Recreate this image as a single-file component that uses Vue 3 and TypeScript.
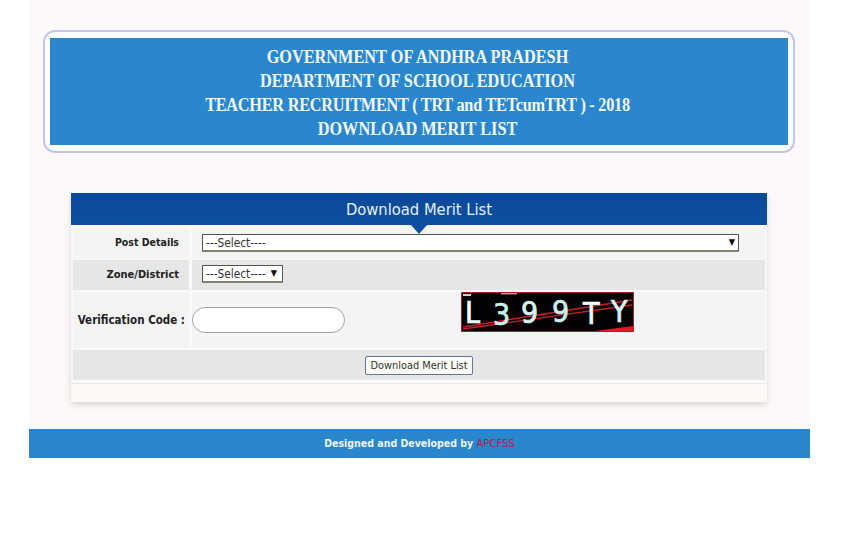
<script setup lang="ts">
const headerLines: string[] = [
  'GOVERNMENT OF ANDHRA PRADESH',
  'DEPARTMENT OF SCHOOL EDUCATION',
  'TEACHER RECRUITMENT ( TRT and TETcumTRT ) - 2018',
  'DOWNLOAD MERIT LIST',
]
</script>

<template>
  <div class="page">
    <main class="sheet">
      <header class="banner-frame">
        <div class="banner">
          <div class="banner-text">
            <div v-for="line in headerLines" :key="line" class="banner-line">{{ line }}</div>
          </div>
        </div>
      </header>

      <section class="panel">
        <h1 class="panel-title">Download Merit List</h1>
        <div class="form">
          <div class="label row-a row-post">Post Details</div>
          <div class="value row-a row-post">
            <div class="select-wrap wide">
              <select class="select"><option>---Select----</option></select>
              <span class="arrow">▼</span>
            </div>
          </div>

          <div class="label row-b row-zone">Zone/District</div>
          <div class="value row-b row-zone">
            <div class="select-wrap narrow">
              <select class="select"><option>---Select----</option></select>
              <span class="arrow">▼</span>
            </div>
          </div>

          <div class="label row-a row-code code-label">Verification Code :</div>
          <div class="value row-a row-code code-value">
            <input class="code-input" type="text" />
            <svg class="captcha" viewBox="0 0 173 40" width="173" height="40">
              <rect x="0" y="0" width="173" height="40" fill="#050203" />
              <path d="M2 35 L171 8 M2 37 L171 13" stroke="#c42026" stroke-width="1.4" fill="none" />
              <path d="M126 40 L172 34 L172 40 Z" fill="#e01b1f" />
              <rect x="0.5" y="0.5" width="172" height="39" fill="none" stroke="#a8202c" />
              <rect x="2" y="2" width="8" height="2" fill="#e8c4c4" />
              <rect x="40" y="1" width="16" height="1.5" fill="#c88a8a" />
              <g class="captcha-text">
                <text x="4" y="31" fill="#f2fbfb" stroke="#f2fbfb">L</text>
                <text x="32" y="33" fill="#c9f0ee" stroke="#c9f0ee">3</text>
                <text x="60" y="31" fill="#d6f4f2" stroke="#d6f4f2">9</text>
                <text x="91" y="30" fill="#c9f0ee" stroke="#c9f0ee">9</text>
                <text x="122" y="32" fill="#f2fbfb" stroke="#f2fbfb">T</text>
                <text x="150" y="30" fill="#d6f4f2" stroke="#d6f4f2">Y</text>
              </g>
            </svg>
          </div>

          <div class="button-row">
            <button class="submit" type="button">Download Merit List</button>
          </div>
        </div>
        <div class="panel-foot"></div>
      </section>
    </main>

    <footer class="footer">
      Designed and Developed by <span class="brand">APCFSS</span>
    </footer>
  </div>
</template>

<style scoped>
.page {
  width: 850px;
  height: 550px;
  background: #fff;
  padding-left: 29px;
  box-sizing: border-box;
  font-family: "DejaVu Sans", Tahoma, sans-serif;
  font-stretch: condensed;
}
.sheet {
  width: 781px;
  height: 429px;
  box-sizing: border-box;
  background: #fdf9f9;
  padding: 30px 15px 0 14px;
}
.banner-frame {
  width: 752px;
  height: 123px;
  box-sizing: border-box;
  border: 2px solid #c2c6e9;
  border-radius: 12px;
  padding: 6px 5px;
  background: #fefcfd;
}
.banner {
  height: 107px;
  background: #2a87cd;
  color: #f4f8fb;
  font-family: "Liberation Serif", "Times New Roman", serif;
  font-weight: 700;
  font-size: 18.5px;
  line-height: 24px;
  text-align: center;
  padding: 7px 3px 0 0;
  box-sizing: border-box;
}
.banner-text {
  transform: scaleX(0.88);
}
.banner-line:nth-child(3) {
  letter-spacing: -0.3px;
}
.panel {
  position: relative;
  width: 696px;
  margin: 40px 0 0 28px;
  box-shadow: 0 3px 6px rgba(0, 0, 0, 0.14);
}
.panel-title {
  position: relative;
  margin: 0;
  height: 32px;
  background: linear-gradient(#0a4a98, #0c4f9f);
  color: #e8f0f8;
  font-weight: 400;
  font-size: 16.4px;
  line-height: 34px;
  text-align: center;
}
.panel-title::after {
  content: "";
  position: absolute;
  left: 340px;
  top: 32px;
  border-left: 8px solid transparent;
  border-right: 8px solid transparent;
  border-top: 9px solid #0c4f9f;
}
.form {
  display: grid;
  grid-template-columns: 116px 573px;
  column-gap: 3px;
  row-gap: 1px;
  padding: 2px 2px 0;
  background: #f9f9f9;
}
.label {
  display: flex;
  align-items: center;
  justify-content: flex-end;
  padding-right: 10px;
  box-sizing: border-box;
  font-size: 11px;
  font-weight: 700;
  color: #222;
}
.value {
  display: flex;
  align-items: flex-start;
  box-sizing: border-box;
}
.row-a {
  background: #f4f4f4;
}
.row-b {
  background: #e6e6e6;
}
.row-post {
  height: 32px;
}
.label.row-post {
  font-size: 10.5px;
  padding-bottom: 2px;
}
.value.row-post {
  padding: 7px 0 0 10px;
}
.row-zone {
  height: 30px;
  margin-bottom: 1px;
}
.label.row-zone {
  padding-bottom: 1px;
}
.value.row-zone {
  padding: 5px 0 0 10px;
}
.row-code {
  height: 56px;
  margin-bottom: 1px;
}
.code-label {
  font-size: 11.5px;
  padding-right: 4px;
  white-space: nowrap;
  padding-bottom: 1px;
}
.code-value {
  padding-left: 0;
}
.select-wrap {
  position: relative;
  height: 18px;
}
.wide {
  width: 537px;
}
.narrow {
  width: 81px;
}
.select {
  display: block;
  appearance: none;
  width: 100%;
  height: 100%;
  box-sizing: border-box;
  border: 1px solid #55534a;
  border-bottom: 2px solid #86826f;
  border-radius: 1px;
  background: #fff;
  padding: 0 0 0 3px;
  font-family: "DejaVu Sans", Tahoma, sans-serif;
  font-stretch: condensed;
  font-size: 11.8px;
  color: #333;
}
.arrow {
  position: absolute;
  right: 4px;
  top: 1px;
  font-size: 9px;
  line-height: 14px;
  color: #111;
  pointer-events: none;
}
.narrow .arrow {
  right: 6px;
}
.code-input {
  width: 153px;
  height: 26px;
  box-sizing: border-box;
  margin: 15px 0 0 0;
  border: 1px solid #a3a3a3;
  border-radius: 13px;
  background: #fff;
}
.captcha {
  display: block;
  margin-left: 116px;
  flex: none;
}
.captcha-text {
  font-family: "DejaVu Sans", sans-serif;
  font-size: 30px;
  font-weight: 400;
  font-stretch: condensed;
  stroke-width: 0.7;
}
.button-row {
  grid-column: 1 / -1;
  height: 30px;
  background: #e6e6e6;
  display: flex;
  align-items: center;
  justify-content: center;
  margin-bottom: 3px;
}
.submit {
  width: 108px;
  height: 19px;
  padding: 0;
  box-sizing: border-box;
  border: 1px solid #5878a0;
  border-radius: 2px;
  background: #fdfcf4;
  font-family: "DejaVu Sans", Tahoma, sans-serif;
  font-stretch: condensed;
  font-size: 10.9px;
  color: #333;
}
.panel-foot {
  height: 19px;
  background: #fdf7f6;
  border-top: 1px solid #e8e8e8;
  box-sizing: border-box;
}
.footer {
  width: 781px;
  height: 29px;
  background: #2a87cd;
  color: #eef5fb;
  font-size: 10.5px;
  font-weight: 700;
  line-height: 29px;
  text-align: center;
}
.brand {
  color: #b01c4a;
  font-size: 11.2px;
  font-weight: 400;
}
</style>
